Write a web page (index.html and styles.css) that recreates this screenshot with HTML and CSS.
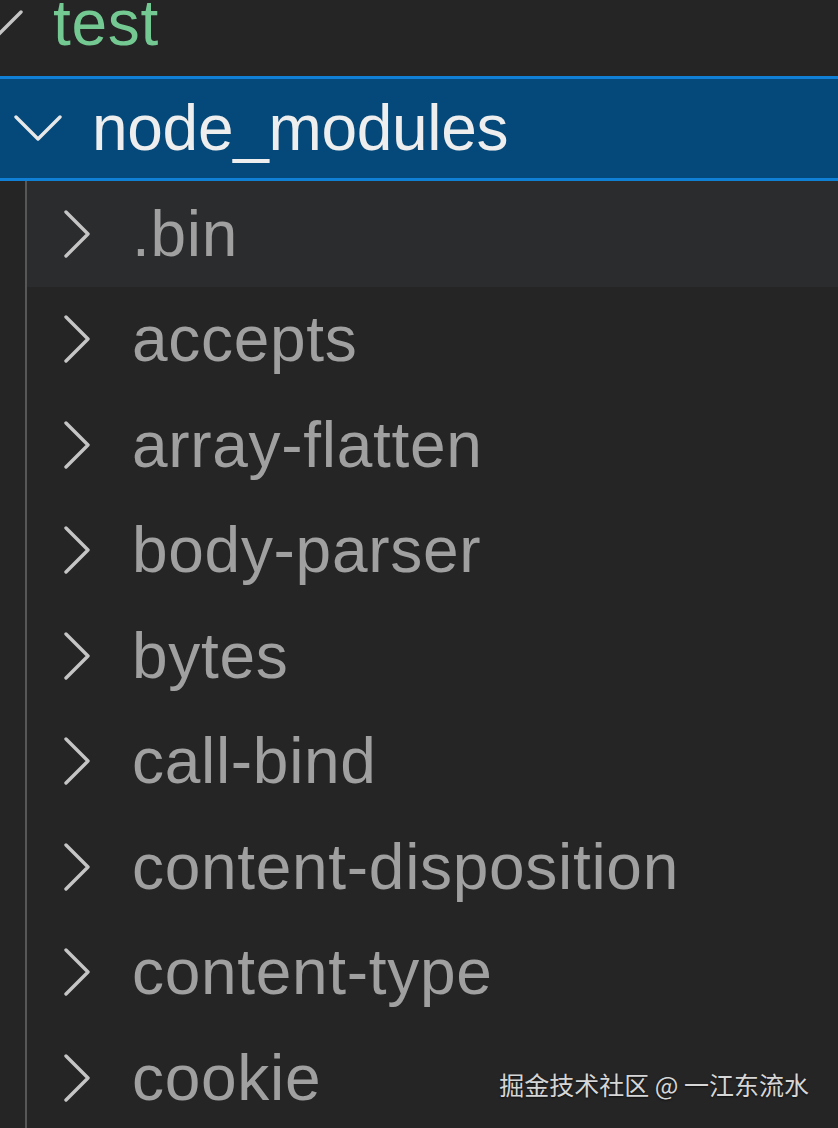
FILE: index.html
```html
<!DOCTYPE html>
<html lang="en">
<head>
<meta charset="utf-8">
<title>Explorer</title>
<link rel="stylesheet" href="styles.css">
</head>
<body>
<div class="explorer">
  <div class="tree">
    <div class="row lvl0">
      <span class="twist"><svg class="down" viewBox="0 0 48 26" width="48" height="26"><polyline points="2,2 24,24 46,2"/></svg></span>
      <span class="label added">test</span>
    </div>
    <div class="row lvl1 selected">
      <span class="twist"><svg class="down" viewBox="0 0 48 26" width="48" height="26"><polyline points="2,2 24,24 46,2"/></svg></span>
      <span class="label">node_modules</span>
    </div>
    <div class="children">
      <div class="row lvl2 hover">
        <span class="twist"><svg class="right" viewBox="0 0 26 48" width="26" height="48"><polyline points="2,2 24,24 2,46"/></svg></span>
        <span class="label ignored">.bin</span>
      </div>
      <div class="row lvl2">
        <span class="twist"><svg class="right" viewBox="0 0 26 48" width="26" height="48"><polyline points="2,2 24,24 2,46"/></svg></span>
        <span class="label ignored">accepts</span>
      </div>
      <div class="row lvl2">
        <span class="twist"><svg class="right" viewBox="0 0 26 48" width="26" height="48"><polyline points="2,2 24,24 2,46"/></svg></span>
        <span class="label ignored">array-flatten</span>
      </div>
      <div class="row lvl2">
        <span class="twist"><svg class="right" viewBox="0 0 26 48" width="26" height="48"><polyline points="2,2 24,24 2,46"/></svg></span>
        <span class="label ignored">body-parser</span>
      </div>
      <div class="row lvl2">
        <span class="twist"><svg class="right" viewBox="0 0 26 48" width="26" height="48"><polyline points="2,2 24,24 2,46"/></svg></span>
        <span class="label ignored">bytes</span>
      </div>
      <div class="row lvl2">
        <span class="twist"><svg class="right" viewBox="0 0 26 48" width="26" height="48"><polyline points="2,2 24,24 2,46"/></svg></span>
        <span class="label ignored">call-bind</span>
      </div>
      <div class="row lvl2">
        <span class="twist"><svg class="right" viewBox="0 0 26 48" width="26" height="48"><polyline points="2,2 24,24 2,46"/></svg></span>
        <span class="label ignored">content-disposition</span>
      </div>
      <div class="row lvl2">
        <span class="twist"><svg class="right" viewBox="0 0 26 48" width="26" height="48"><polyline points="2,2 24,24 2,46"/></svg></span>
        <span class="label ignored">content-type</span>
      </div>
      <div class="row lvl2">
        <span class="twist"><svg class="right" viewBox="0 0 26 48" width="26" height="48"><polyline points="2,2 24,24 2,46"/></svg></span>
        <span class="label ignored">cookie</span>
      </div>
    </div>
  </div>
  <div class="watermark">掘金技术社区 @ 一江东流水</div>
</div>
</body>
</html>
```
FILE: styles.css
```css
html, body {
  margin: 0;
  padding: 0;
  background: #252526;
  overflow: hidden;
}

.explorer {
  position: relative;
  width: 838px;
  height: 1128px;
  overflow: hidden;
  background: #252526;
  font-family: "Liberation Sans", Arial, sans-serif;
}

.tree {
  margin-top: -30px;
}

.row {
  display: flex;
  align-items: center;
  height: 105.5px;
  box-sizing: border-box;
  white-space: nowrap;
}

.lvl0 { padding-left: 0; }
.lvl1 { padding-left: 39px; }
.lvl2 { padding-left: 78px; }

.twist {
  display: flex;
  align-items: center;
  justify-content: center;
  flex: 0 0 48px;
  width: 48px;
  margin-left: -25px;
  margin-right: 30px;
}

.twist svg polyline {
  fill: none;
  stroke: #c5c5c5;
  stroke-width: 3.4;
  stroke-linecap: round;
  stroke-linejoin: round;
}

.selected .twist svg polyline {
  stroke: #e8e8e8;
}

.label {
  font-size: 64px;
  color: #a0a0a0;
  line-height: 1;
  letter-spacing: 0.7px;
}

.label.added {
  color: #73c991;
}

.selected {
  background: #04497a;
  border-top: 3px solid #0f80d5;
  border-bottom: 3px solid #0f80d5;
}

.selected .label {
  color: #eeeeee;
  letter-spacing: -0.3px;
}

.hover {
  background: #2a2c2e;
}

.children {
  border-left: 2px solid #575757;
  margin-left: 25px;
}

.children .lvl2 {
  padding-left: 51px;
}

.children .twist {
  margin-right: 31px;
}

.watermark {
  position: absolute;
  right: 29px;
  bottom: 29px;
  font-family: "Noto Sans CJK SC", sans-serif;
  font-size: 25px;
  line-height: 1.2;
  color: #d6d6d6;
  text-shadow: 0 1px 2px rgba(0,0,0,0.6);
}
```
